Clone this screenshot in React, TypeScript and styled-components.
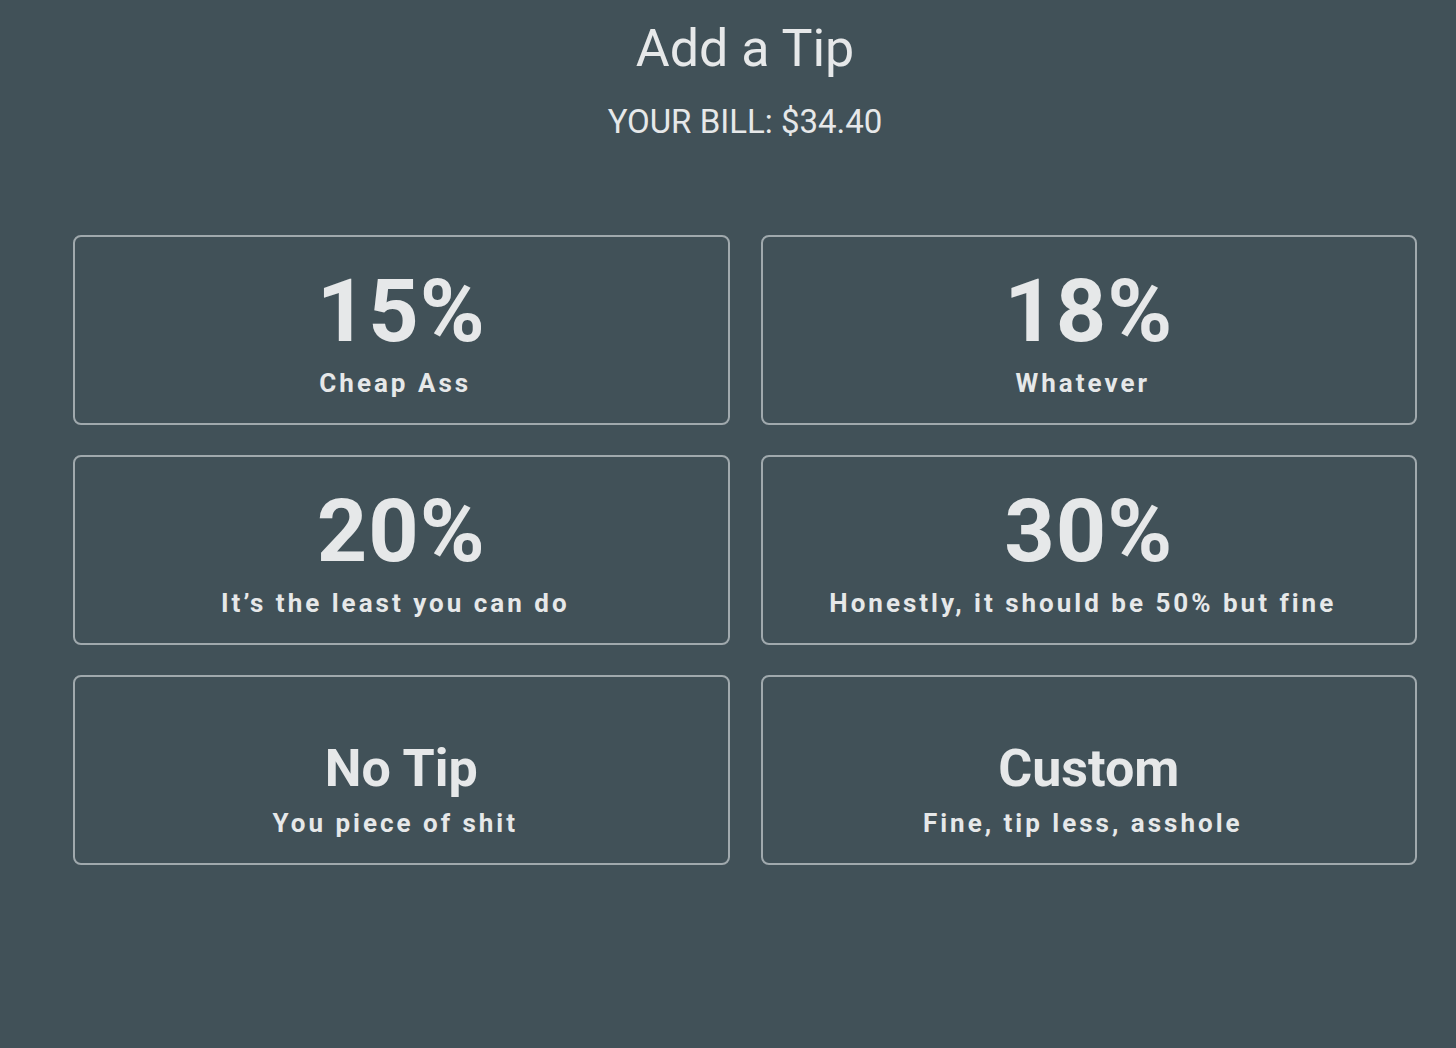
import styled, { createGlobalStyle } from "styled-components";

const GlobalStyle = createGlobalStyle`
  html, body {
    margin: 0;
    padding: 0;
    background: #415158;
  }

  body {
    min-height: 100vh;
    font-family: Roboto, "Liberation Sans", sans-serif;
    color: #e6e8e9;
  }
`;

const Page = styled.div`
  width: 100%;
  min-height: 1048px;
  box-sizing: border-box;
  padding: 18px 39px 0 73px;

  display: flex;
  flex-direction: column;
  align-items: center;

  background: #415158;
`;

const Title = styled.h1`
  margin: 0;
  font-size: 52px;
  line-height: 62px;
  font-weight: 400;
  color: #e6e8e9;
`;

const Bill = styled.div`
  margin-top: 23px;
  font-size: 33px;
  line-height: 38px;
  font-weight: 400;
  color: #e6e8e9;
`;

const TipGrid = styled.div`
  width: 100%;
  margin-top: 94px;

  display: grid;
  grid-template-columns: 1fr 1fr;
  column-gap: 31px;
  row-gap: 30px;
`;

const TipCard = styled.button`
  height: 190px;
  box-sizing: border-box;
  padding: 30px 0 0 0;

  display: flex;
  flex-direction: column;
  align-items: center;

  background: transparent;
  border: 2px solid #a0a9ad;
  border-radius: 8px;
  color: #e6e8e9;
  font-family: Roboto, "Liberation Sans", sans-serif;
  cursor: pointer;
`;

const Heading = styled.div`
  height: 88px;
  display: flex;
  align-items: flex-end;
`;

const Amount = styled.span<{ $small?: boolean }>`
  font-size: ${(p) => (p.$small ? "52px" : "88px")};
  line-height: ${(p) => (p.$small ? "52px" : "88px")};
  font-weight: 700;
  letter-spacing: ${(p) => (p.$small ? "0" : "1px")};
`;

const Caption = styled.span`
  margin-top: 13px;
  padding-right: 12px;
  font-size: 26px;
  line-height: 30px;
  font-weight: 700;
  letter-spacing: 3px;
  white-space: nowrap;
`;

const tips = [
  { amount: "15%", caption: "Cheap Ass" },
  { amount: "18%", caption: "Whatever" },
  { amount: "20%", caption: "It’s the least you can do" },
  { amount: "30%", caption: "Honestly, it should be 50% but fine" },
  { amount: "No Tip", caption: "You piece of shit", small: true },
  { amount: "Custom", caption: "Fine, tip less, asshole", small: true },
];

export default function App() {
  return (
    <>
      <GlobalStyle />
      <Page>
        <Title>Add a Tip</Title>
        <Bill>YOUR BILL: $34.40</Bill>
        <TipGrid>
          {tips.map((tip) => (
            <TipCard key={tip.amount}>
              <Heading>
                <Amount $small={tip.small}>{tip.amount}</Amount>
              </Heading>
              <Caption>{tip.caption}</Caption>
            </TipCard>
          ))}
        </TipGrid>
      </Page>
    </>
  );
}
